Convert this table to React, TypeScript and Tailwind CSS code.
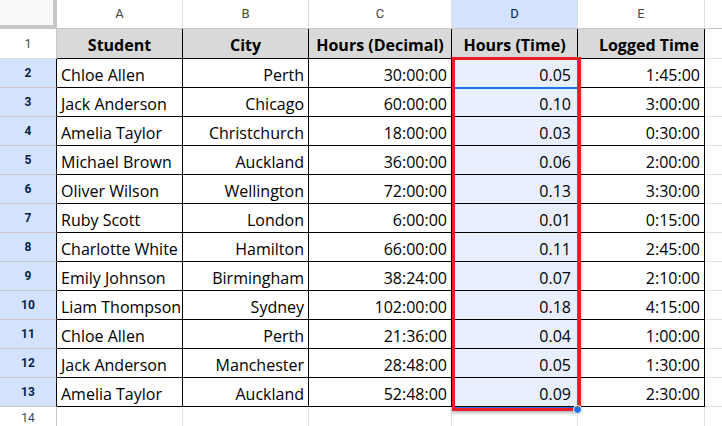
import React from "react";

const rows: string[][] = [
  ["Chloe Allen", "Perth", "30:00:00", "0.05", "1:45:00"],
  ["Jack Anderson", "Chicago", "60:00:00", "0.10", "3:00:00"],
  ["Amelia Taylor", "Christchurch", "18:00:00", "0.03", "0:30:00"],
  ["Michael Brown", "Auckland", "36:00:00", "0.06", "2:00:00"],
  ["Oliver Wilson", "Wellington", "72:00:00", "0.13", "3:30:00"],
  ["Ruby Scott", "London", "6:00:00", "0.01", "0:15:00"],
  ["Charlotte White", "Hamilton", "66:00:00", "0.11", "2:45:00"],
  ["Emily Johnson", "Birmingham", "38:24:00", "0.07", "2:10:00"],
  ["Liam Thompson", "Sydney", "102:00:00", "0.18", "4:15:00"],
  ["Chloe Allen", "Perth", "21:36:00", "0.04", "1:00:00"],
  ["Jack Anderson", "Manchester", "28:48:00", "0.05", "1:30:00"],
  ["Amelia Taylor", "Auckland", "52:48:00", "0.09", "2:30:00"],
];

const widths = ["w-[126px]", "w-[126px]", "w-[143px]", "w-[126px]", "w-[127px]"];
const letters = ["A", "B", "C", "D", "E"];

export default function App() {
  return (
    <div className="relative w-[722px] h-[426px] overflow-hidden bg-white font-['Open_Sans',sans-serif] text-black">
      {/* column header row */}
      <div className="flex h-[29px]">
        <div className="w-[57px] h-[29px] bg-[#f8f9fa] border-r-4 border-b-4 border-[#c7c7c7]" />
        {letters.map((l, i) => (
          <div
            key={l}
            className={`${widths[i]} h-[29px] flex items-center justify-center border-r border-b border-r-[#dadce0] border-b-[#c7c7c7] font-['Roboto',sans-serif] text-[13px] ${
              l === "D" ? "bg-[#d3e3fd] text-[#041e49]" : "bg-white text-[#444746]"
            }`}
          >
            {l}
          </div>
        ))}
        <div className="flex-1 h-[29px] border-b border-[#c7c7c7]" />
      </div>

      {/* row 1 header */}
      <div className="flex h-[30px]">
        <div className="w-[57px] flex items-center justify-center border-r border-b border-r-[#c7c7c7] border-b-[#dadce0] font-['Roboto',sans-serif] text-[12px] text-[#444746]">
          1
        </div>
        {["Student", "City", "Hours (Decimal)", "Hours (Time)", "Logged Time"].map((h, i) => (
          <div
            key={h}
            className={`${widths[i]} flex items-end ${
              i === 4 ? "justify-end pr-[5px]" : "justify-center"
            } pb-[5px] bg-[#d9d9d9] border-r border-b border-black font-bold text-[16px] leading-none`}
          >
            {h}
          </div>
        ))}
        <div className="flex-1 border-b border-[#e1e1e1]" />
      </div>

      {/* data rows */}
      {rows.map((r, ri) => (
        <div key={ri} className="flex h-[29px]">
          <div className="w-[57px] flex items-center justify-center bg-[#d3e3fd] border-r border-b border-r-black border-b-[#c7c7c7] font-['Roboto',sans-serif] font-bold text-[12px] text-[#041e49]">
            {ri + 2}
          </div>
          {r.map((c, ci) => (
            <div
              key={ci}
              className={`${widths[ci]} flex items-end pb-[4px] border-r border-b border-black text-[16px] leading-none ${
                ci === 0 ? "justify-start pl-[4px]" : "justify-end pr-[4px]"
              } ${ci === 3 ? "bg-[#e8effc] pr-[6px]" : "bg-white"}`}
            >
              {c}
            </div>
          ))}
          <div className="flex-1 border-b border-[#e1e1e1]" />
        </div>
      ))}

      {/* row 14 */}
      <div className="flex h-[19px]">
        <div className="w-[57px] flex items-start justify-center pt-[5px] border-r border-[#c7c7c7] font-['Roboto',sans-serif] text-[12px] leading-none text-[#444746]">
          14
        </div>
        {widths.map((w, i) => (
          <div key={i} className={`${w} border-r border-[#e1e1e1]`} />
        ))}
        <div className="flex-1" />
      </div>

      {/* selection range */}
      <div className="absolute left-[452px] top-[58px] w-[126px] h-[350px] border border-[#1a73e8]" />
      {/* active cell */}
      <div className="absolute left-[453px] top-[58px] w-[126px] h-[31px] border-2 border-[#1a73e8]" />
      {/* red annotation box */}
      <div className="absolute left-[452px] top-[57px] w-[129px] h-[354px] border-[3px] border-[#ee1c24] shadow-[0_2px_3px_rgba(0,0,0,0.3)]" />
      {/* fill handle */}
      <div className="absolute left-[573px] top-[405px] w-[9px] h-[9px] rounded-full bg-[#1a73e8] border border-white" />
    </div>
  );
}
